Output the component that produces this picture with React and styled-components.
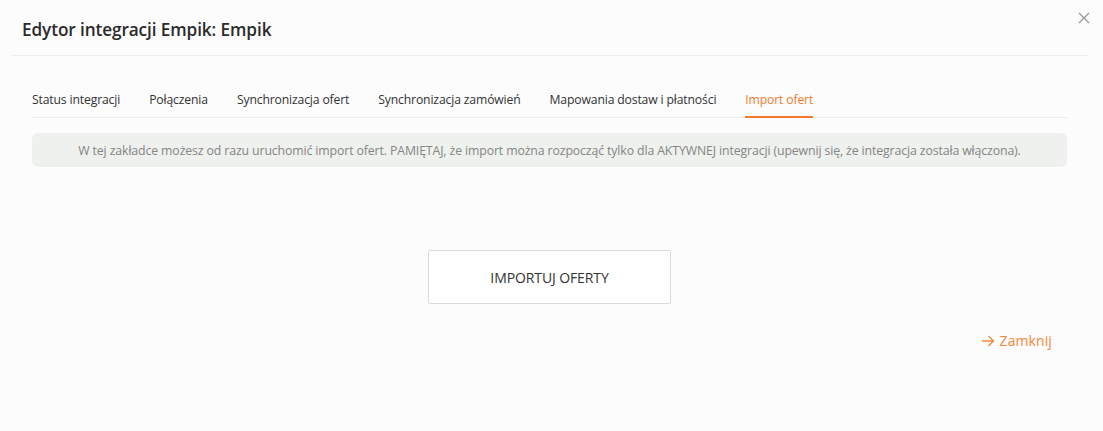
import React, { useState } from 'react'
import styled, { createGlobalStyle } from 'styled-components'

const GlobalStyle = createGlobalStyle`
  html, body { margin: 0; padding: 0; background: #fcfcfc; }
  body { font-family: "Open Sans", "Noto Sans", sans-serif; color: #333; }
  * { box-sizing: border-box; }
`

const Modal = styled.div`
  position: relative;
  width: 1103px;
  height: 431px;
  background: #fcfcfc;
`

const Header = styled.div`
  margin: 0 15px 0 11px;
  height: 56px;
  padding: 0 0 0 11px;
  display: flex;
  align-items: center;
  border-bottom: 1px solid #ececec;
`

const Title = styled.h4`
  margin: 4px 0 0;
  font-size: 17.2px;
  font-weight: 600;
  color: #2b2b2b;
  letter-spacing: -0.1px;
`

const Close = styled.button`
  position: absolute;
  top: 11px;
  right: 12px;
  width: 14px;
  height: 14px;
  padding: 0;
  border: 0;
  background: none;
  cursor: pointer;
`

const Body = styled.div`
  padding: 28px 36px 0 32px;
`

const Tabs = styled.div`
  display: flex;
  gap: 29px;
  border-bottom: 1px solid #ececec;
`

const Tab = styled.div`
  padding: 7px 0 8px;
  font-size: 12.2px;
  letter-spacing: -0.15px;
  color: ${p => (p.$active ? '#f07b2b' : '#333')};
  border-bottom: 2px solid ${p => (p.$active ? '#f07b2b' : 'transparent')};
  margin-bottom: -1px;
  cursor: pointer;
`

const Info = styled.div`
  margin-top: 15px;
  height: 34px;
  border-radius: 6px;
  background: #eef1ed;
  color: #858585;
  font-size: 12.3px;
  letter-spacing: -0.12px;
  display: flex;
  align-items: center;
  justify-content: center;
`

const Center = styled.div`
  display: flex;
  justify-content: center;
  margin-top: 83px;
`

const ImportButton = styled.button`
  width: 243px;
  height: 54px;
  background: #fff;
  border: 1px solid #dadada;
  border-radius: 2px;
  font-family: inherit;
  font-size: 14px;
  color: #333;
  letter-spacing: -0.1px;
  cursor: pointer;
`

const Footer = styled.div`
  display: flex;
  justify-content: flex-end;
  margin-top: 27px;
  padding-right: 15px;
`

const CloseLink = styled.a`
  display: flex;
  align-items: center;
  gap: 5px;
  color: #f5873a;
  font-size: 14px;
  letter-spacing: 0.1px;
  cursor: pointer;
`

const tabs = [
  'Status integracji',
  'Połączenia',
  'Synchronizacja ofert',
  'Synchronizacja zamówień',
  'Mapowania dostaw i płatności',
  'Import ofert',
]

export default function App() {
  const [active, setActive] = useState(5)
  return (
    <>
      <GlobalStyle />
      <Modal>
        <Header>
          <Title>Edytor integracji Empik: Empik</Title>
        </Header>
        <Close aria-label="close">
          <svg width="14" height="14" viewBox="0 0 14 14">
            <path d="M2 2L12 12M12 2L2 12" stroke="#999" strokeWidth="1.3" />
          </svg>
        </Close>
        <Body>
          <Tabs>
            {tabs.map((t, i) => (
              <Tab key={t} $active={i === active} onClick={() => setActive(i)}>
                {t}
              </Tab>
            ))}
          </Tabs>
          <Info>
            W tej zakładce możesz od razu uruchomić import ofert. PAMIĘTAJ, że import można rozpocząć tylko dla AKTYWNEJ integracji (upewnij się, że integracja została włączona).
          </Info>
          <Center>
            <ImportButton>IMPORTUJ OFERTY</ImportButton>
          </Center>
          <Footer>
            <CloseLink>
              <svg width="14" height="12" viewBox="0 0 14 12">
                <path d="M1 6H12.5M7.5 1L12.5 6L7.5 11" fill="none" stroke="#f5873a" strokeWidth="1.3" />
              </svg>
              Zamknij
            </CloseLink>
          </Footer>
        </Body>
      </Modal>
    </>
  )
}
